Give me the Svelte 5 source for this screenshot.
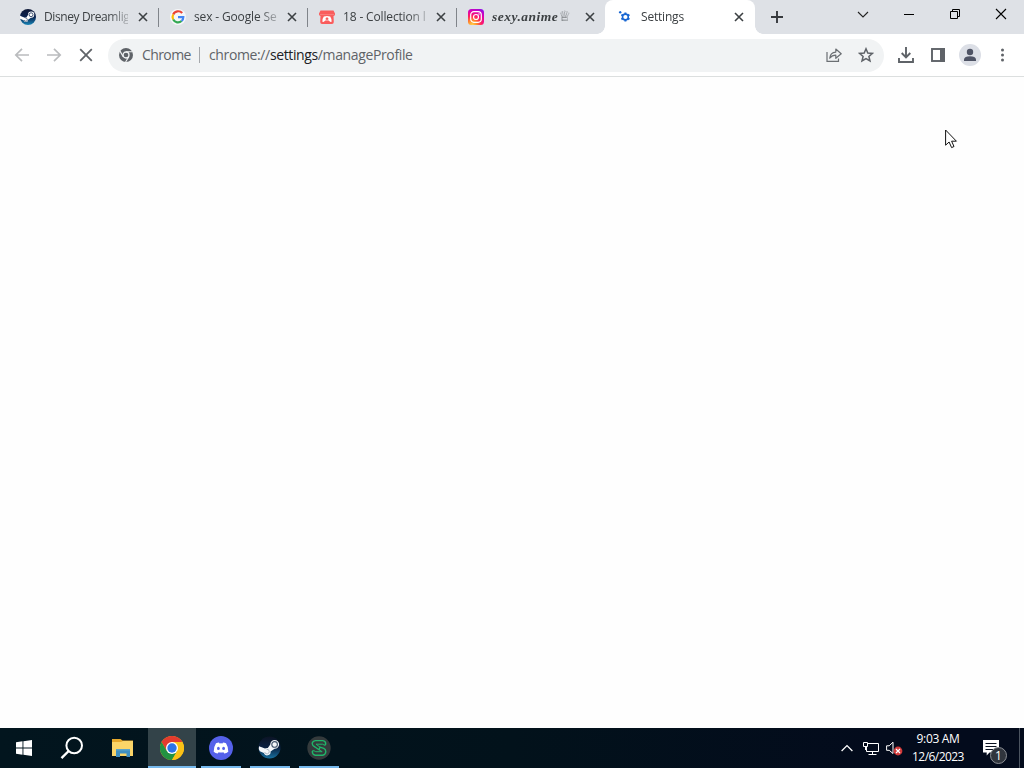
<script>
  const tabs = [
    { id: 'steam', title: 'Disney Dreamlig', spacing: -0.4 },
    { id: 'google', title: 'sex - Google Se', spacing: -0.15 },
    { id: 'itch', title: '18 - Collection l', spacing: -0.15 },
    { id: 'instagram', title: 'sexy.anime', spacing: 0.5 },
    { id: 'settings', title: 'Settings', spacing: -0.2 }
  ];

  let active = $state('settings');

  const apps = ['chrome', 'discord', 'steam', 'green'];
</script>

{#snippet steam()}
  <svg width="16" height="16" viewBox="0 0 24 24">
    <defs>
      <linearGradient id="steam-bg" x1="0" y1="0" x2="0" y2="1">
        <stop offset="0" stop-color="#101a38" />
        <stop offset="0.5" stop-color="#0b2350" />
        <stop offset="1" stop-color="#1786b8" />
      </linearGradient>
    </defs>
    <circle cx="12" cy="12" r="12" fill="url(#steam-bg)" />
    <path d="M0 10 L7.2 13 Q8.5 12.5 9.5 12.8 L12.2 8.8 A4.6 4.6 0 1 1 16.3 13.1 L12.1 16 A3.4 3.4 0 0 1 5.4 17 L0 14.8Z" fill="#fff" />
    <circle cx="16.6" cy="8.6" r="2.9" fill="none" stroke="#23385d" stroke-width="1.3" />
    <path d="M6.3 16.6 A2.4 2.4 0 1 0 8.2 13.7" fill="none" stroke="#23385d" stroke-width="1" />
  </svg>
{/snippet}

{#snippet cross()}
  <svg width="10" height="10" viewBox="0 0 10 10">
    <path d="M1 1 L9 9 M9 1 L1 9" stroke="#3c4043" stroke-width="1.6" />
  </svg>
{/snippet}

{#snippet favicon(id)}
  {#if id === 'steam'}
    {@render steam()}
  {:else if id === 'google'}
    <svg width="16" height="16" viewBox="0 0 16 16">
      <circle cx="8" cy="8" r="8" fill="#f6f7f9" />
      <g fill="none" stroke-width="2.2">
        <path d="M12.2 4.1 A5.4 5.4 0 0 0 3.2 5.5" stroke="#ea4335" />
        <path d="M3.2 5.5 A5.4 5.4 0 0 0 3.2 10.5" stroke="#fbbc05" />
        <path d="M3.2 10.5 A5.4 5.4 0 0 0 11.6 12" stroke="#34a853" />
        <path d="M11.6 12 A5.4 5.4 0 0 0 13.3 8.2 H8" stroke="#4285f4" />
      </g>
    </svg>
  {:else if id === 'itch'}
    <svg width="16" height="16" viewBox="0 0 16 16">
      <path d="M1.5 1.5 H14.5 L16 4.5 V5.5 Q15.5 7 14.5 7 L14.8 13 Q14.7 15 13 15 H3 Q1.3 15 1.2 13 L1.5 7 Q.2 6.5 0 5.5 V4.5Z" fill="#fa5c5c" />
      <path d="M1 5.6 H15" stroke="#f8908f" stroke-width=".7" />
      <path d="M4.8 7.5 Q8 6.7 11.2 7.5 Q12.8 9.5 12.6 12.8 Q11 13.4 9.8 11.6 H6.2 Q5 13.4 3.4 12.8 Q3.2 9.5 4.8 7.5Z" fill="#fff" />
      <path d="M8 8 L10 10.2 H8.8 V11.2 H7.2 V10.2 H6Z" fill="#fa5c5c" />
    </svg>
  {:else if id === 'instagram'}
    <svg width="16" height="16" viewBox="0 0 16 16">
      <defs>
        <radialGradient id="insta" cx="0.27" cy="1" r="1.15">
          <stop offset="0" stop-color="#ffd54b" />
          <stop offset="0.25" stop-color="#ff8a2b" />
          <stop offset="0.5" stop-color="#ff1c62" />
          <stop offset="0.78" stop-color="#d800b8" />
          <stop offset="1" stop-color="#8a12ea" />
        </radialGradient>
      </defs>
      <rect width="16" height="16" rx="3.5" fill="url(#insta)" />
      <rect x="2.7" y="2.7" width="10.6" height="10.6" rx="3.2" fill="none" stroke="#fff" stroke-width="1.2" />
      <circle cx="8" cy="8" r="2.5" fill="none" stroke="#fff" stroke-width="1.2" />
      <circle cx="11" cy="5" r=".7" fill="#fff" />
    </svg>
  {:else}
    <svg width="16" height="16" viewBox="0 0 16 16">
      <circle cx="8.4" cy="8" r="2.9" fill="none" stroke="#1967d2" stroke-width="1.6" />
      <path d="M8.4 3.4 V5.2 M8.4 10.8 V12.6 M4.4 5.7 L6 6.6 M10.8 9.4 L12.4 10.3 M4.4 10.3 L6 9.4 M10.8 6.6 L12.4 5.7" stroke="#1967d2" stroke-width="2" />
      <path d="M3.2 2 V4.6 M1.9 3.3 H4.5" stroke="#1967d2" stroke-width="1.3" />
    </svg>
  {/if}
{/snippet}

{#snippet appIcon(id)}
  {#if id === 'chrome'}
    <svg width="24" height="24" viewBox="0 0 24 24">
      <circle cx="12" cy="12" r="12" fill="#fbc116" />
      <path d="M1.6 6 A12 12 0 0 1 22.4 6 H12 L6.8 15Z" fill="#e33b2e" />
      <path d="M1.6 6 A12 12 0 0 0 12 24 L17.2 15 H6.8Z" fill="#229342" />
      <path d="M12 24 A12 12 0 0 0 22.4 6 H12 L17.2 15Z" fill="#fbc116" />
      <circle cx="12" cy="12" r="6" fill="#fff" />
      <circle cx="12" cy="12" r="4.7" fill="#2c73e8" />
    </svg>
  {:else if id === 'discord'}
    <svg width="24" height="24" viewBox="0 0 24 24">
      <circle cx="12" cy="12" r="12" fill="#5561ea" />
      <path d="M7 7.3 Q8.6 6.6 10 6.5 L10.5 7.4 Q12 7.1 13.5 7.4 L14 6.5 Q15.5 6.6 17 7.3 Q19.4 11 19.3 15.7 Q17.5 17.2 15.3 17.6 L14.4 16.2 Q12 16.8 9.6 16.2 L8.7 17.6 Q6.5 17.2 4.7 15.7 Q4.6 11 7 7.3Z" fill="#fff" />
      <ellipse cx="9.4" cy="12.4" rx="1.4" ry="1.6" fill="#5561ea" />
      <ellipse cx="14.6" cy="12.4" rx="1.4" ry="1.6" fill="#5561ea" />
    </svg>
  {:else if id === 'steam'}
    <svg width="24" height="24" viewBox="0 0 24 24">
      <defs>
        <linearGradient id="steam-app" x1="0" y1="0" x2="0" y2="1">
          <stop offset="0" stop-color="#0c1425" />
          <stop offset="0.5" stop-color="#0b2142" />
          <stop offset="1" stop-color="#17709f" />
        </linearGradient>
      </defs>
      <circle cx="11.5" cy="11.5" r="11" fill="url(#steam-app)" />
      <path d="M1 10.2 L7 12.6 Q8.3 11.8 9.8 12 L12.3 8.4 A4.4 4.4 0 1 1 16.6 12.7 L12.6 15.5 A3.5 3.5 0 0 1 5.8 17 L1.8 15.2 Q.2 12.5 1 10.2Z" fill="#f4f7fa" />
      <circle cx="16.6" cy="8.4" r="2.8" fill="none" stroke="#41536b" stroke-width="1.1" />
      <path d="M6.7 16 A2.3 2.3 0 1 0 8.6 13.3" fill="none" stroke="#9aa8b8" stroke-width=".8" />
    </svg>
  {:else}
    <svg width="24" height="24" viewBox="0 0 24 24">
      <circle cx="12" cy="12" r="11.7" fill="#343a3c" />
      <path d="M17.8 9.4 L18.7 8 Q18.8 5 15.8 4.6 H8.4 Q5.3 5 5.2 7.8 Q5.4 10 8 11 L12 13.8 L13 11.2 L16.8 12.4 Q18.8 13.4 18.8 15.8 Q18.6 18.8 15.6 19.3 H8.4 Q5.4 18.8 5.3 15.8 L6.4 14.4" fill="none" stroke="#20b56a" stroke-width="1.4" stroke-linejoin="round" />
      <path d="M17.8 9.4 L15.6 8.2 H9 L13 11.2 M6.4 14.4 L8.8 15.7 H15.2 L12 13.8" fill="none" stroke="#20b56a" />
    </svg>
  {/if}
{/snippet}

<div class="screen">
  <header class="tabstrip">
    <div class="tabs">
      {#each tabs as tab (tab.id)}
        <!-- svelte-ignore a11y_click_events_have_key_events, a11y_no_static_element_interactions -->
        <div class="tab" class:active={active === tab.id} onclick={() => (active = tab.id)}>
          <span class="favicon">{@render favicon(tab.id)}</span>
          <span class="title" class:fancy={tab.id === 'instagram'} style="letter-spacing: {tab.spacing}px">
            {tab.title}{#if tab.id === 'instagram'}<span class="crown">♕</span>{/if}
          </span>
          <span class="close">{@render cross()}</span>
        </div>
      {/each}
    </div>
    <div class="new-tab">
      <svg width="12" height="12" viewBox="0 0 12 12"><path d="M6 0 V12 M0 6 H12" stroke="#36393d" stroke-width="1.9" /></svg>
    </div>
    <div class="window-controls">
      <svg width="46" height="30" viewBox="0 0 46 30"><path d="M18 12 L23 17 L28 12" fill="none" stroke="#222" stroke-width="1.1" /></svg>
      <svg width="46" height="30" viewBox="0 0 46 30"><path d="M18 14.5 H28" stroke="#000" /></svg>
      <svg width="46" height="30" viewBox="0 0 46 30">
        <path d="M18.5 11.5 H25.5 V18.5 H18.5Z M20.5 11.5 V9.5 H27.5 V16.5 H25.5" fill="none" stroke="#000" />
      </svg>
      <svg width="46" height="30" viewBox="0 0 46 30"><path d="M18 9 L28 19 M28 9 L18 19" stroke="#000" stroke-width="1.1" /></svg>
    </div>
  </header>

  <nav class="toolbar">
    <div class="nav-buttons">
      <svg width="16" height="16" viewBox="0 0 16 16"><path d="M15 8 H2 M8 1.8 L1.8 8 L8 14.2" fill="none" stroke="#babcbe" stroke-width="1.7" /></svg>
      <svg width="16" height="16" viewBox="0 0 16 16"><path d="M1 8 H14 M8 1.8 L14.2 8 L8 14.2" fill="none" stroke="#babcbe" stroke-width="1.7" /></svg>
      <svg width="16" height="16" viewBox="0 0 16 16"><path d="M2.2 2.2 L13.8 13.8 M13.8 2.2 L2.2 13.8" stroke="#5f6368" stroke-width="1.8" /></svg>
    </div>
    <div class="omnibox">
      <svg width="14" height="14" viewBox="0 0 14 14">
        <circle cx="7" cy="7" r="7" fill="#5f6368" />
        <circle cx="7" cy="7" r="3" fill="#5f6368" stroke="#f1f3f4" stroke-width="1.3" />
        <path d="M7 3.8 H13.4 M4.2 8.6 L1 3.1 M9.8 8.6 L6.6 14" stroke="#f1f3f4" stroke-width="1.1" />
      </svg>
      <span class="chip">Chrome</span>
      <span class="divider"></span>
      <span class="url">chrome://<b>settings</b>/manageProfile</span>
      <svg width="16" height="16" viewBox="0 0 16 16">
        <path d="M1 5 V14.3 H12.5 V11.5" fill="none" stroke="#6b6f73" stroke-width="1.2" />
        <path d="M3.7 11.2 Q4.2 5.5 9.8 5.1 V2 L15.2 6.8 L9.8 11.3 V8.2 Q6 8.2 3.7 11.2Z" fill="none" stroke="#6b6f73" stroke-width="1.2" stroke-linejoin="round" />
      </svg>
      <svg class="star" width="16" height="16" viewBox="0 0 16 16">
        <path d="M8 1.8 L9.8 6 L14.4 6.4 L10.9 9.5 L12 14 L8 11.6 L4 14 L5.1 9.5 L1.6 6.4 L6.2 6Z" fill="none" stroke="#5f6368" stroke-width="1.5" />
      </svg>
    </div>
    <div class="actions">
      <svg width="16" height="16" viewBox="0 0 16 16">
        <path d="M8 0 V10 M3.7 6 L8 10.3 L12.3 6 M1 11 V15 H15 V11" fill="none" stroke="#5f6368" stroke-width="1.9" />
      </svg>
      <svg width="14" height="14" viewBox="0 0 14 14">
        <rect x="1" y="1" width="12" height="12" fill="none" stroke="#5f6368" stroke-width="1.9" />
        <rect x="9" y="0" width="5" height="14" fill="#5f6368" />
      </svg>
      <div class="avatar">
        <svg width="22" height="22" viewBox="0 0 22 22">
          <circle cx="11" cy="8" r="3.2" fill="#4e5364" />
          <path d="M5 17 V15.3 Q5.5 12.5 11 12.3 Q16.5 12.5 17 15.3 V17Z" fill="#4e5364" />
        </svg>
      </div>
      <svg width="4" height="14" viewBox="0 0 4 14" fill="#5f6368">
        <circle cx="1.5" cy="2" r="1.5" /><circle cx="1.5" cy="7" r="1.5" /><circle cx="1.5" cy="12" r="1.5" />
      </svg>
    </div>
  </nav>

  <main class="page">
    <svg class="cursor" width="13" height="20" viewBox="0 0 13 20">
      <path d="M.6 1 V16.2 L4.1 13 L6.6 18.6 L9 17.5 L6.6 12.2 H11.4Z" fill="#fff" stroke="#111" stroke-width="1" />
    </svg>
  </main>

  <footer class="taskbar">
    <div class="slot">
      <svg width="16" height="16" viewBox="0 0 16 16" fill="#fff">
        <path d="M0 2.2 L6.5 1.3 V7.5 H0Z M7.4 1.2 L16 0 V7.5 H7.4Z M0 8.4 H6.5 V14.7 L0 13.8Z M7.4 8.4 H16 V16 L7.4 14.8Z" />
      </svg>
    </div>
    <div class="slot">
      <svg width="24" height="24" viewBox="0 0 24 24">
        <circle cx="14.2" cy="9.5" r="7.8" fill="none" stroke="#fff" stroke-width="2" />
        <path d="M8.7 15 L1.5 22.2" stroke="#fff" stroke-width="2.4" />
      </svg>
    </div>
    <div class="slot folder">
      <svg width="22" height="18" viewBox="0 0 22 18">
        <path d="M0 0 H8.5 L10.5 1.5 H21 V17 H0Z" fill="#e6a82c" />
        <path d="M0 3 H9 L11 2 H21 V17 H0Z" fill="#fbd568" />
        <path d="M4 18 V10 H18 V18 H14.5 V14.5 H8 V18Z" fill="#3f8fc0" />
        <path d="M4 10 H18 V11.5 H4Z" fill="#5ba3c8" />
      </svg>
    </div>
    <div class="apps">
      {#each apps as app}
        <div class="app" class:current={app === 'chrome'}>{@render appIcon(app)}</div>
      {/each}
    </div>
    <div class="tray">
      <svg width="12" height="8" viewBox="0 0 12 8"><path d="M.6 7 L6 1.6 L11.4 7" fill="none" stroke="#fff" stroke-width="1.3" /></svg>
      <svg class="network" width="17" height="15" viewBox="0 0 17 15">
        <path d="M5 2.5 H15.5 V10.5 H3.5 V6 M9.5 10.5 V13.5 M5.5 13.5 H13.5 M.5 1.5 H4.5 V5.5 H.5Z M2.5 5.5 V9" fill="none" stroke="#fff" />
      </svg>
      <svg class="volume" width="17" height="15" viewBox="0 0 17 15">
        <path d="M.6 4.8 H3.2 L7 1.2 V12.5 L3.2 9.3 H.6Z" fill="none" stroke="#fff" />
        <circle cx="12" cy="10" r="4.4" fill="#d23a3a" />
        <path d="M10 8 L14 12 M14 8 L10 12" stroke="#fff" stroke-width="1.2" />
      </svg>
      <div class="clock">
        <span class="time">9:03 AM</span>
        <span class="date">12/6/2023</span>
      </div>
      <div class="notify">
        <svg width="16" height="16" viewBox="0 0 16 16">
          <path d="M0 0 H16 V12.5 H6.5 L3.7 15.5 V12.5 H0Z" fill="#fff" />
          <path d="M2.5 3.5 H13.5 M2.5 6.5 H13.5 M2.5 9.5 H10" stroke="#0a1220" />
        </svg>
        <span class="badge">1</span>
      </div>
      <div class="show-desktop"></div>
    </div>
  </footer>
</div>

<style>
  :global(body) {
    margin: 0;
    overflow: hidden;
  }

  .screen {
    display: flex;
    flex-direction: column;
    width: 1024px;
    height: 768px;
    background: #fff;
    font-family: 'Open Sans', 'Noto Sans', sans-serif;
    font-size: 12px;
    color: #3c4043;
    cursor: default;
  }

  svg {
    display: block;
    flex: none;
  }

  .tabstrip {
    display: flex;
    height: 34px;
    background: #dee1e6;
  }

  .tabs {
    display: flex;
    padding-left: 10px;
  }

  .tab {
    display: flex;
    align-items: center;
    box-sizing: border-box;
    width: 149px;
    height: 34px;
    padding-left: 11px;
    background: linear-gradient(#80848a, #80848a) right 8px / 1px 19px no-repeat;
  }

  .tab:first-child {
    padding-left: 10px;
  }

  .tab:nth-last-child(2) {
    background: none;
  }

  .tab.active {
    position: relative;
    width: 150px;
    margin-left: -1px;
    padding-left: 12px;
    background: #fff;
    border-radius: 8px 8px 0 0;
  }

  /* outward curves at the foot of the selected tab */
  .tab.active::before,
  .tab.active::after {
    content: '';
    position: absolute;
    bottom: 0;
    width: 8px;
    height: 8px;
  }

  .tab.active::before {
    left: -8px;
    background: radial-gradient(circle at 0 0, transparent 7.5px, #fff 8px);
  }

  .tab.active::after {
    right: -8px;
    background: radial-gradient(circle at 100% 0, transparent 7.5px, #fff 8px);
  }

  .favicon {
    width: 16px;
  }

  .title {
    width: 84px;
    margin-left: 8px;
    white-space: nowrap;
    line-height: 18px;
    mask-image: linear-gradient(to right, #000 64px, rgba(0, 0, 0, 0.2) 86px);
  }

  .fancy {
    font-family: 'Liberation Serif', serif;
    font-size: 13.5px;
    font-weight: bold;
    font-style: italic;
  }

  .crown {
    font-family: 'DejaVu Sans', sans-serif;
    font-size: 14px;
    line-height: 14px;
    font-weight: bold;
    font-style: normal;
  }

  .close {
    margin-left: 9px;
  }

  .tab:first-child .close {
    margin-left: 10px;
  }

  .new-tab {
    padding: 11px 0 0 16px;
  }

  .window-controls {
    display: flex;
    margin-left: auto;
  }

  .toolbar {
    display: flex;
    align-items: center;
    box-sizing: border-box;
    height: 43px;
    border-bottom: 1px solid #dcdfdf;
  }

  .nav-buttons {
    display: flex;
    gap: 16px;
    width: 94px;
    padding-left: 14px;
  }

  .omnibox {
    display: flex;
    align-items: center;
    box-sizing: border-box;
    width: 776px;
    height: 33px;
    padding: 0 10px 0 11px;
    border-radius: 17px;
    background: #f1f3f4;
    font-size: 14px;
    color: #5f6368;
  }

  .chip {
    width: 49px;
    margin-left: 9px;
    padding-bottom: 1px;
    letter-spacing: -0.6px;
    white-space: nowrap;
  }

  .divider {
    width: 1px;
    height: 16px;
    margin: 0 9px 0 8px;
    background: #a5a8ac;
  }

  .url {
    flex: 1;
    padding-bottom: 1px;
    letter-spacing: -0.37px;
  }

  .url b {
    font-weight: normal;
    color: #202124;
  }

  .star {
    margin-left: 16px;
  }

  .actions {
    display: flex;
    align-items: center;
    padding-left: 14px;
  }

  .actions > :nth-child(2) {
    margin: 0 14px 0 17px;
  }

  .actions > :last-child {
    margin-left: 20px;
  }

  .avatar {
    display: flex;
    align-items: center;
    justify-content: center;
    width: 22px;
    height: 22px;
    border-radius: 50%;
    background: #dcdfe6;
  }

  .page {
    position: relative;
    flex: 1;
    background: #fefefe;
  }

  .cursor {
    position: absolute;
    left: 945px;
    top: 52px;
  }

  .taskbar {
    display: flex;
    height: 40px;
    background: linear-gradient(to right, #02151e, #02121b 50%, #030b1c 85%, #030b1c);
    color: #fff;
  }

  .slot {
    display: flex;
    align-items: center;
    justify-content: center;
    width: 48px;
  }

  .folder {
    box-sizing: border-box;
    width: 52px;
    padding-left: 2px;
  }

  .apps {
    display: flex;
    gap: 9px;
  }

  .app {
    display: flex;
    align-items: center;
    justify-content: center;
    box-sizing: border-box;
    width: 40px;
    height: 40px;
    padding-top: 2px;
    border-bottom: 2px solid #76b9ed;
  }

  .app.current {
    width: 48px;
    margin-right: -4px;
    background: #334349;
  }

  .tray {
    display: flex;
    align-items: center;
    margin-left: auto;
  }

  .network {
    margin-left: 10px;
  }

  .volume {
    margin-left: 6px;
  }

  .clock {
    display: flex;
    flex-direction: column;
    align-items: center;
    width: 66px;
    margin-left: 2px;
    line-height: 18px;
    white-space: nowrap;
  }

  .time {
    letter-spacing: -0.35px;
  }

  .date {
    letter-spacing: -0.55px;
  }

  .notify {
    position: relative;
    width: 16px;
    margin-left: 12px;
  }

  .badge {
    position: absolute;
    left: 7px;
    top: 7px;
    box-sizing: border-box;
    width: 17px;
    height: 17px;
    border: 1px solid #8b8f95;
    border-radius: 50%;
    background: #30353d;
    font-size: 12px;
    line-height: 15px;
    text-align: center;
  }

  .show-desktop {
    width: 4px;
    height: 40px;
    margin-left: 20px;
    border-left: 1px solid #4b5460;
  }
</style>
